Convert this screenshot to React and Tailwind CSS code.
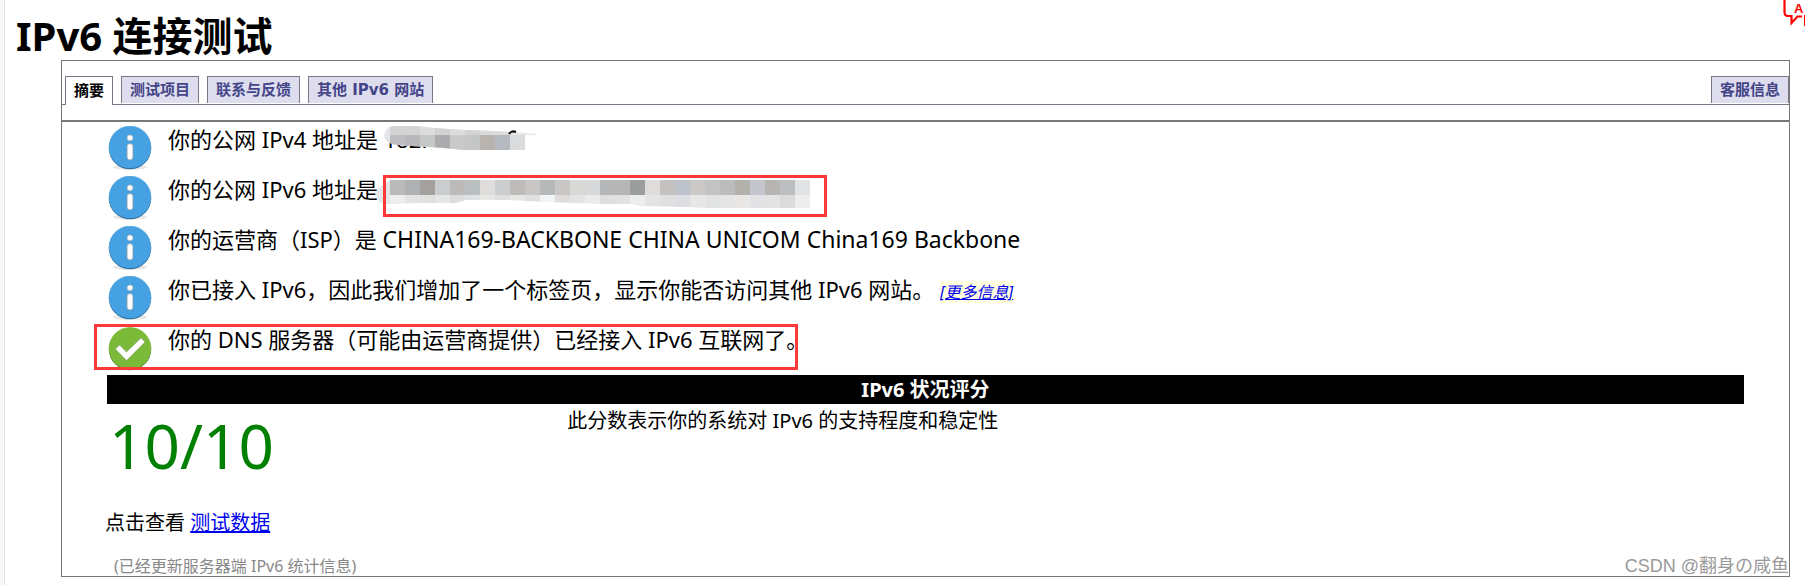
import React from 'react';

const BLOCK = 15;

const tabs = [
  { label: '摘要', active: true },
  { label: '测试项目' },
  { label: '联系与反馈' },
  { label: '其他 IPv6 网站' },
];

const ipv4Top = ['#d3d3d3', '#d3d3d3', '#dcdcdc', '#d2d2d2', '#dcdcdc', '#d3d3d3', '#dadada', '#dcdcdc'];
const ipv4Bottom = ['#bebdbf', '#b9b8ba', '#c5c8c7', '#acacae', '#c9c9c9', '#c5c7c6', '#b8b3ae', '#b6bbc1', '#dadbdd'];

const ipv6Top = [
  '#bababa', '#afb0b2', '#a3a09d', '#cbccce', '#bdbbba', '#babfc2', '#dfdddc', '#cbcdcf', '#bdbcba', '#c9c7c5',
  '#b6b9b8', '#c9c7c5', '#d8d8d6', '#d6d8da', '#b5b6b8', '#b6b6b6', '#9c9e9d', '#dfdddc', '#c4c2c0', '#bec2cb',
  '#cbc9c7', '#c3c3c3', '#bcbcbc', '#b3b1ab', '#c5c6cd', '#b7b5b1', '#bdbec0', '#e2e3e5',
];
const ipv6Bottom = [
  '#edefee', '#e3e3e3', '#e0e0df', '#e5e7e6', '#dddddf', '#e0e1e4', '#e7e7e6', '#dfdfe0', '#e7e7e6', '#e0e0e0',
  '#f3f4f8', '#dfdcdb', '#e3e4e6', '#ebebeb', '#dfdfdf', '#e1e1e1', '#eceeed', '#e4e4e4', '#e0e0e1', '#dcdee2',
  '#e7e7e7', '#e1e4e3', '#e5e5e5', '#e9e8e6', '#e2e2e4', '#e3e3e3', '#dbdbdb', '#ededee',
];

const InfoIcon = () => (
  <svg width="44" height="46" viewBox="0 0 44 46" className="block shrink-0" aria-hidden="true">
    <ellipse cx="22" cy="41" rx="17" ry="3" fill="#e9e7e5" />
    <circle cx="22" cy="22" r="21.3" fill="#2f76ab" />
    <circle cx="22" cy="20.6" r="21" fill="#7fbdea" />
    <circle cx="22" cy="21.2" r="20.9" fill="#45a1e1" />
    <circle cx="22" cy="11.8" r="2.9" fill="#fff" stroke="#b9b3ae" strokeWidth="0.7" />
    <rect x="19.2" y="17.7" width="5.6" height="16" rx="2.6" fill="#fff" stroke="#b9b3ae" strokeWidth="0.7" />
  </svg>
);

const CheckIcon = () => (
  <svg width="44" height="46" viewBox="0 0 44 46" className="block shrink-0" aria-hidden="true">
    <circle cx="22" cy="23" r="21.3" fill="#4f8322" />
    <circle cx="22" cy="22" r="21" fill="#a4d073" />
    <circle cx="22" cy="22.5" r="20.9" fill="#7aba38" />
    <path d="M7.5 23 L11.5 19 L18.5 26 L33 12 L37 16 L18.5 34.5 Z" fill="#fff" stroke="#8f9a80" strokeWidth="0.6" />
  </svg>
);

const Ipv4Mosaic = () => (
  <svg width="154" height="24" viewBox="0 0 154 24" className="absolute left-0 top-0" aria-hidden="true">
    <clipPath id="ipv4-smear">
      <path d="M0 10 Q1 1 9 0 L32 0 L50 2 L80 4 L110 5 L153 8 L153 9 L141 9 L141 24 L79 24 L60 22 L14 19 Q1 18 0 10 Z" />
    </clipPath>
    <path d="M110 6 L113 5 V8 H110 Z M125 8 Q127 4 132 6 V9 H125 Z" fill="#111" />
    <g clipPath="url(#ipv4-smear)" shapeRendering="crispEdges">
      <rect width="154" height="24" fill="#e4e6ea" />
      {ipv4Top.map((fill, i) => (
        <rect key={i} x={6 + i * BLOCK} y="0" width={BLOCK} height="9" fill={fill} />
      ))}
      {ipv4Bottom.map((fill, i) => (
        <rect key={i} x={6 + i * BLOCK} y="9" width={BLOCK} height="15" fill={fill} />
      ))}
    </g>
    <path d="M125 8 Q128 4 132 6" fill="none" stroke="#111" strokeWidth="2" />
  </svg>
);

const Ipv6Mosaic = () => (
  <svg width="434" height="28" viewBox="0 0 434 28" className="absolute -left-0.5 top-1" aria-hidden="true">
    <clipPath id="ipv6-smear">
      <path d="M0 14 Q2 6 10 3 L14 0 L434 0 L434 28 L330 28 L310 27 L264 26 L255 24 L225 24 L200 23 L170 22 L150 21 L130 20 L90 20 L80 23 L40 23 L20 24 L8 24 Q1 22 0 14 Z" />
    </clipPath>
    <g clipPath="url(#ipv6-smear)" shapeRendering="crispEdges">
      <rect width="14" height="28" fill="#e4e6ea" />
      {ipv6Top.map((fill, i) => (
        <rect key={i} x={14 + i * BLOCK} y="0" width={BLOCK} height="15" fill={fill} />
      ))}
      {ipv6Bottom.map((fill, i) => (
        <rect key={i} x={14 + i * BLOCK} y="15" width={BLOCK} height="13" fill={fill} />
      ))}
    </g>
  </svg>
);

const Row = ({ icon, children }) => (
  <li className="relative flex h-[50px] items-start gap-4 pt-1">
    {icon}
    <p className="text-[22px] leading-[27px] whitespace-nowrap">{children}</p>
  </li>
);

const Tab = ({ label, active }) => (
  <button
    type="button"
    role="tab"
    aria-selected={Boolean(active)}
    className={`border border-b-0 border-[#778] px-2 text-[15px] font-bold leading-[26px] whitespace-nowrap font-['DejaVu_Sans','Noto_Sans_CJK_SC',sans-serif] ${
      active ? 'h-[29px] bg-white text-black' : 'h-[27px] bg-[#dde] text-[#448]'
    }`}
  >
    {label}
  </button>
);

const App = () => {
  return (
    <div className="relative flex min-h-screen overflow-hidden bg-white text-black font-['Noto_Sans','Noto_Sans_CJK_SC',sans-serif]">
      <div className="w-[5px] shrink-0 border-r border-[#e4e4e4] bg-[#f6f6f6]" />

      <main className="min-w-0 flex-1 pl-[11px] pr-[15px] pt-3">
        <h1 className="text-[40px] font-bold leading-[48px]">IPv6 连接测试</h1>

        <div className="ml-[45px] border border-[#777]">
          {/* Tabs */}
          <div role="tablist" className="flex h-[44px] items-start gap-2 border-b border-[#778] pl-[3px] pt-[15px]">
            {tabs.map((tab) => (
              <Tab key={tab.label} {...tab} />
            ))}
            <div className="ml-auto flex">
              <Tab label="客服信息" />
            </div>
          </div>
          <div className="h-[17px] border-b-2 border-[#777]" />

          {/* Summary */}
          <ul className="pb-[3px] pl-[46px]">
            <Row icon={<InfoIcon />}>
              你的公网 IPv4 地址是{' '}
              <span className="relative inline-block">
                182.
                <Ipv4Mosaic />
              </span>
            </Row>
            <Row icon={<InfoIcon />}>
              你的公网 IPv6 地址是
              <span className="relative inline-block h-[27px] w-[434px] align-top">
                <Ipv6Mosaic />
                <span className="absolute left-[5px] -top-px h-[42px] w-[444px] border-3 border-[#fd3a3a]" />
              </span>
            </Row>
            <Row icon={<InfoIcon />}>
              你的运营商（ISP）是 <span className="text-[23px]">CHINA169-BACKBONE CHINA UNICOM China169 Backbone</span>
            </Row>
            <Row icon={<InfoIcon />}>
              你已接入 IPv6，因此我们增加了一个标签页，显示你能否访问其他 IPv6 网站。{' '}
              <a href="#more" className="bg-[#ffffe0] text-base italic text-[#00e] underline">
                [更多信息]
              </a>
            </Row>
            <Row icon={<CheckIcon />}>
              你的 DNS 服务器（可能由运营商提供）已经接入 IPv6 互联网了。
              <span className="absolute -left-[14px] top-0.5 h-[46px] w-[704px] border-3 border-[#fd3a3a]" />
            </Row>
          </ul>

          {/* Score */}
          <section className="mx-[45px]">
            <h2 className="bg-black text-center text-xl font-bold leading-[29px] text-white">IPv6 状况评分</h2>
            <div className="flex h-[104px] items-start gap-0.5">
              <div className="w-[28%] pl-0.5 text-[62px] leading-[82px] text-[#008000]">10/10</div>
              <p className="pt-px text-xl leading-[32px]">此分数表示你的系统对 IPv6 的支持程度和稳定性</p>
            </div>
          </section>
          <p className="pl-[43px] text-xl leading-[30px]">
            点击查看{' '}
            <a href="#data" className="text-[#00e] underline">
              测试数据
            </a>
          </p>
          <p className="pl-[52px] pt-[18px] text-base leading-[20px] text-[#888]">(已经更新服务器端 IPv6 统计信息)</p>
        </div>
      </main>

      <svg width="22" height="27" viewBox="0 0 22 27" className="absolute right-0 top-0" aria-hidden="true">
        <path d="M1.5 0 V12 Q1.5 16 5 16 H8.5 V23 L14.5 16.5 H19" fill="none" stroke="#f00" strokeWidth="2.2" />
        <path d="M21.5 15 V26" stroke="#f00" strokeWidth="1" />
        <text x="11" y="13" fill="#f00" fontSize="13" fontWeight="bold" fontFamily="Liberation Sans, sans-serif">
          A
        </text>
      </svg>

      <div className="absolute bottom-[7px] right-4 text-lg leading-6 text-[#999] font-['Liberation_Sans','Noto_Sans_CJK_SC',sans-serif]">
        CSDN @翻身の咸鱼
      </div>
    </div>
  );
};

export default App;
